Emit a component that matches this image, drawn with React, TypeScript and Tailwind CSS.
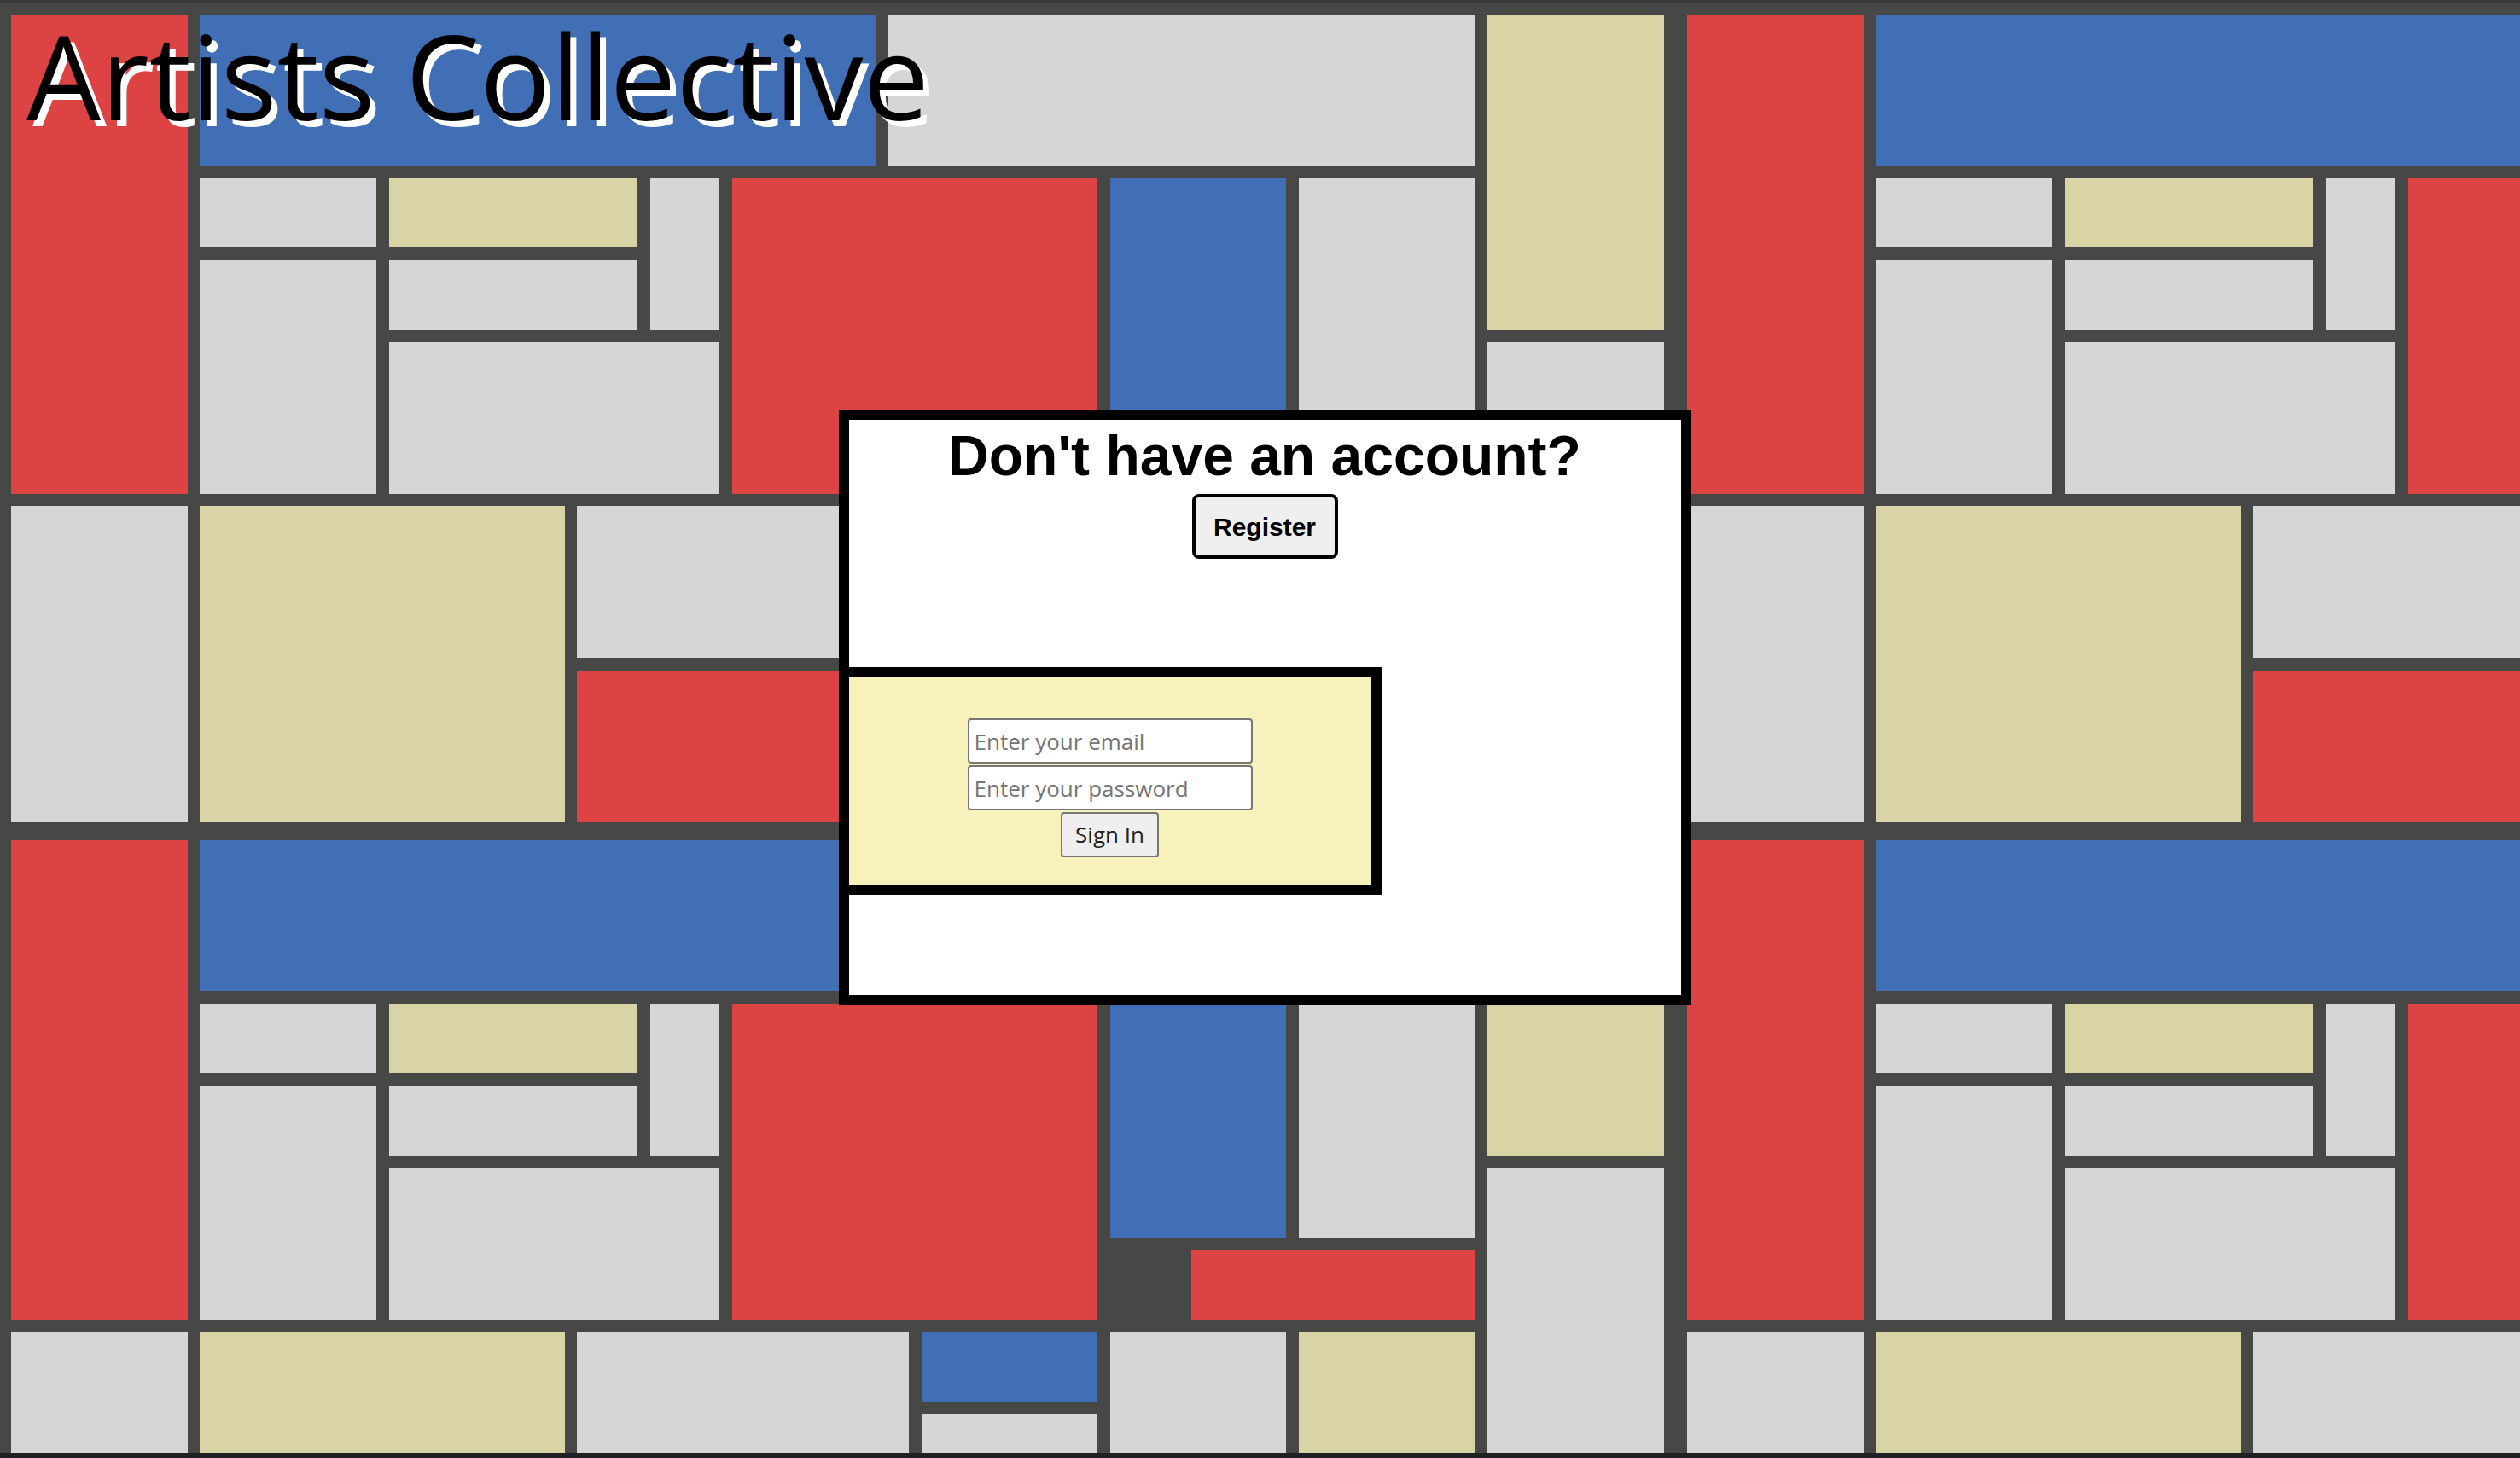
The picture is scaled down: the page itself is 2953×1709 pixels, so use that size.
const RED = "#dc4342";
const BLUE = "#416fb6";
const GRAY = "#d6d6d6";
const YELLOW = "#d8d4a5";

// one tile of the background painting, in page coordinates of the top-left copy
const tile: [number, number, number, number, string][] = [
  [13, 17, 207, 562, RED],
  [234, 17, 792, 177, BLUE],
  [1040, 17, 689, 177, GRAY],
  [1743, 17, 207, 370, YELLOW],
  [234, 209, 207, 81, GRAY],
  [456, 209, 291, 81, YELLOW],
  [762, 209, 81, 178, GRAY],
  [858, 209, 428, 370, RED],
  [234, 305, 207, 274, GRAY],
  [456, 305, 291, 82, GRAY],
  [456, 401, 387, 178, GRAY],
  [1301, 209, 206, 274, BLUE],
  [1522, 209, 206, 274, GRAY],
  [1396, 497, 332, 82, RED],
  [1743, 401, 207, 562, GRAY],
  [13, 593, 207, 370, GRAY],
  [234, 593, 428, 370, YELLOW],
  [676, 593, 389, 178, GRAY],
  [676, 786, 389, 177, RED],
  [1080, 593, 206, 82, BLUE],
  [1080, 690, 206, 273, GRAY],
  [1301, 593, 206, 370, GRAY],
  [1522, 593, 206, 370, YELLOW],
];

const offsets = [
  [0, 0],
  [1964, 0],
  [0, 968],
  [1964, 968],
];

function Painting() {
  return (
    <svg
      className="absolute inset-0 h-full w-full"
      viewBox="0 4 2953 1699"
      preserveAspectRatio="none"
    >
      {offsets.map(([ox, oy]) =>
        tile.map(([x, y, w, h, c], i) => (
          <rect key={`${ox}-${oy}-${i}`} x={x + ox} y={y + oy} width={w} height={h} fill={c} />
        ))
      )}
    </svg>
  );
}

function SignInForm() {
  return (
    <div className="mt-[127px] flex h-[267px] w-[624px] flex-col items-center border-y-[12px] border-r-[12px] border-black bg-[#f7f1bc] pt-[48px]">
      <input
        className="h-[53px] w-[334px] rounded-[4px] border-2 border-[#767676] bg-white px-[6px] font-['Open_Sans',sans-serif] text-[26px] text-black placeholder:text-[#757575]"
        placeholder="Enter your email"
        type="email"
      />
      <input
        className="mt-[2px] h-[53px] w-[334px] rounded-[4px] border-2 border-[#767676] bg-white px-[6px] font-['Open_Sans',sans-serif] text-[26px] text-black placeholder:text-[#757575]"
        placeholder="Enter your password"
        type="password"
      />
      <button
        className="mt-[2px] h-[53px] w-[115px] rounded-[4px] border-2 border-[#767676] bg-[#efefef] font-['Open_Sans',sans-serif] text-[26px] text-[#222]"
        type="submit"
      >
        Sign In
      </button>
    </div>
  );
}

export default function App() {
  return (
    <div className="flex h-[1709px] w-full flex-col overflow-hidden bg-[#474745]">
      <div className="h-[3px] bg-[#3a3a3a]" />
      <div className="h-[1px] bg-[#5a5a5a]" />
      <main className="relative flex-1">
        <Painting />
        <div className="relative flex flex-col">
          <h1 className="pl-[31px] pt-[3px] font-['Open_Sans',sans-serif] text-[138px] leading-[160px] text-black [text-shadow:7px_7px_0_#fff]">
            Artists Collective
          </h1>
          <div className="flex justify-center pl-[11px]">
            <div className="mt-[313px] flex h-[698px] w-[999px] flex-col items-stretch border-[12px] border-black bg-white">
              <h2 className="mt-[4px] text-center font-['Liberation_Sans',Arial,sans-serif] text-[66px] font-bold leading-[76px] text-black">
                Don't have an account?
              </h2>
              <div className="mt-[7px] flex justify-center">
                <button className="h-[76px] w-[171px] rounded-[8px] border-4 border-black bg-[#efefef] font-['Liberation_Sans',Arial,sans-serif] text-[30px] font-bold text-black">
                  Register
                </button>
              </div>
              <SignInForm />
            </div>
          </div>
        </div>
      </main>
      <div className="h-[6px] bg-[#1f2224]" />
    </div>
  );
}
